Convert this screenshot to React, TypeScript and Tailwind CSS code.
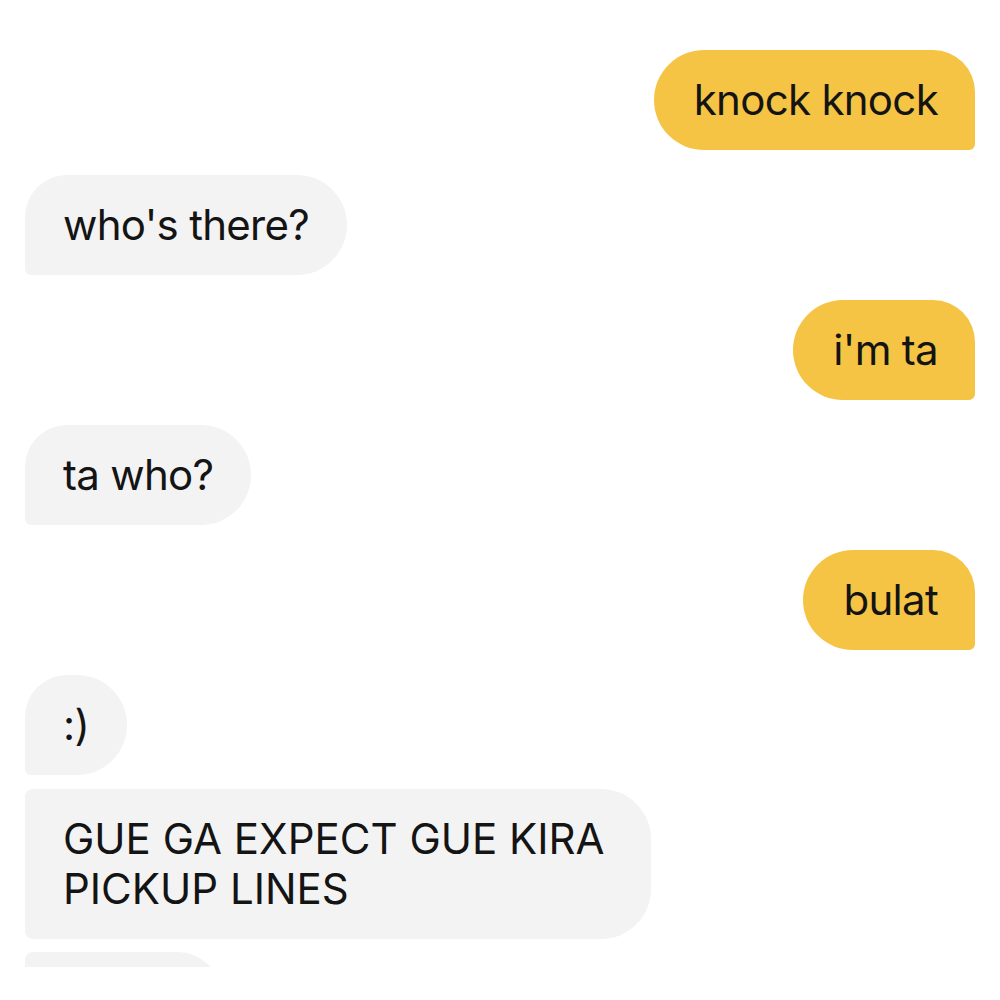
type Msg = {
  id: number;
  mine: boolean;
  lines: string[];
  shape: string;
  gap: string;
};

const mineShape = "rounded-l-[50px] rounded-tr-[42px] rounded-br-[6px]";
const theirShape = "rounded-r-[50px] rounded-tl-[42px] rounded-bl-[6px]";

const messages: Msg[] = [
  { id: 1, mine: true, lines: ["knock knock"], shape: mineShape, gap: "mt-0" },
  { id: 2, mine: false, lines: ["who's there?"], shape: theirShape, gap: "mt-[25px]" },
  { id: 3, mine: true, lines: ["i'm ta"], shape: mineShape, gap: "mt-[25px]" },
  { id: 4, mine: false, lines: ["ta who?"], shape: theirShape, gap: "mt-[25px]" },
  { id: 5, mine: true, lines: ["bulat"], shape: mineShape, gap: "mt-[25px]" },
  { id: 6, mine: false, lines: [":)"], shape: theirShape, gap: "mt-[25px]" },
  {
    id: 7,
    mine: false,
    lines: ["GUE GA EXPECT GUE KIRA", "PICKUP LINES"],
    shape: "rounded-r-[50px] rounded-l-[8px] pr-[46px]",
    gap: "mt-[14px]",
  },
];

function Bubble({ msg }: { msg: Msg }) {
  const caps = msg.lines[0] === msg.lines[0].toUpperCase() && /[A-Z]/.test(msg.lines[0]);
  return (
    <div className={`flex ${msg.mine ? "justify-end" : "justify-start"} ${msg.gap}`}>
      <div
        className={`${
          msg.mine ? "bg-[#f5c445] pl-[40px] pr-[37px]" : "bg-[#f3f3f3] pl-[38px] pr-[38px]"
        } ${msg.shape} ${caps ? "" : "tracking-[-0.7px]"} py-[25px] text-[42px] leading-[50px] text-[#141414]`}
      >
        {msg.lines.map((l, i) => (
          <div key={i} className="whitespace-pre">
            {l}
          </div>
        ))}
      </div>
    </div>
  );
}

export default function App() {
  return (
    <div
      className="w-[1000px] h-[1000px] overflow-hidden bg-white px-[25px] pt-[50px]"
      style={{ fontFamily: 'Inter, "Liberation Sans", sans-serif' }}
    >
      {messages.map((m) => (
        <Bubble key={m.id} msg={m} />
      ))}

      {/* next message, cut off by the screenshot edge */}
      <div className="mt-[13px] h-[15px] overflow-hidden">
        <div className="h-[100px] w-[195px] rounded-tl-[8px] rounded-tr-[42px] bg-[#f3f3f3]" />
      </div>
    </div>
  );
}
